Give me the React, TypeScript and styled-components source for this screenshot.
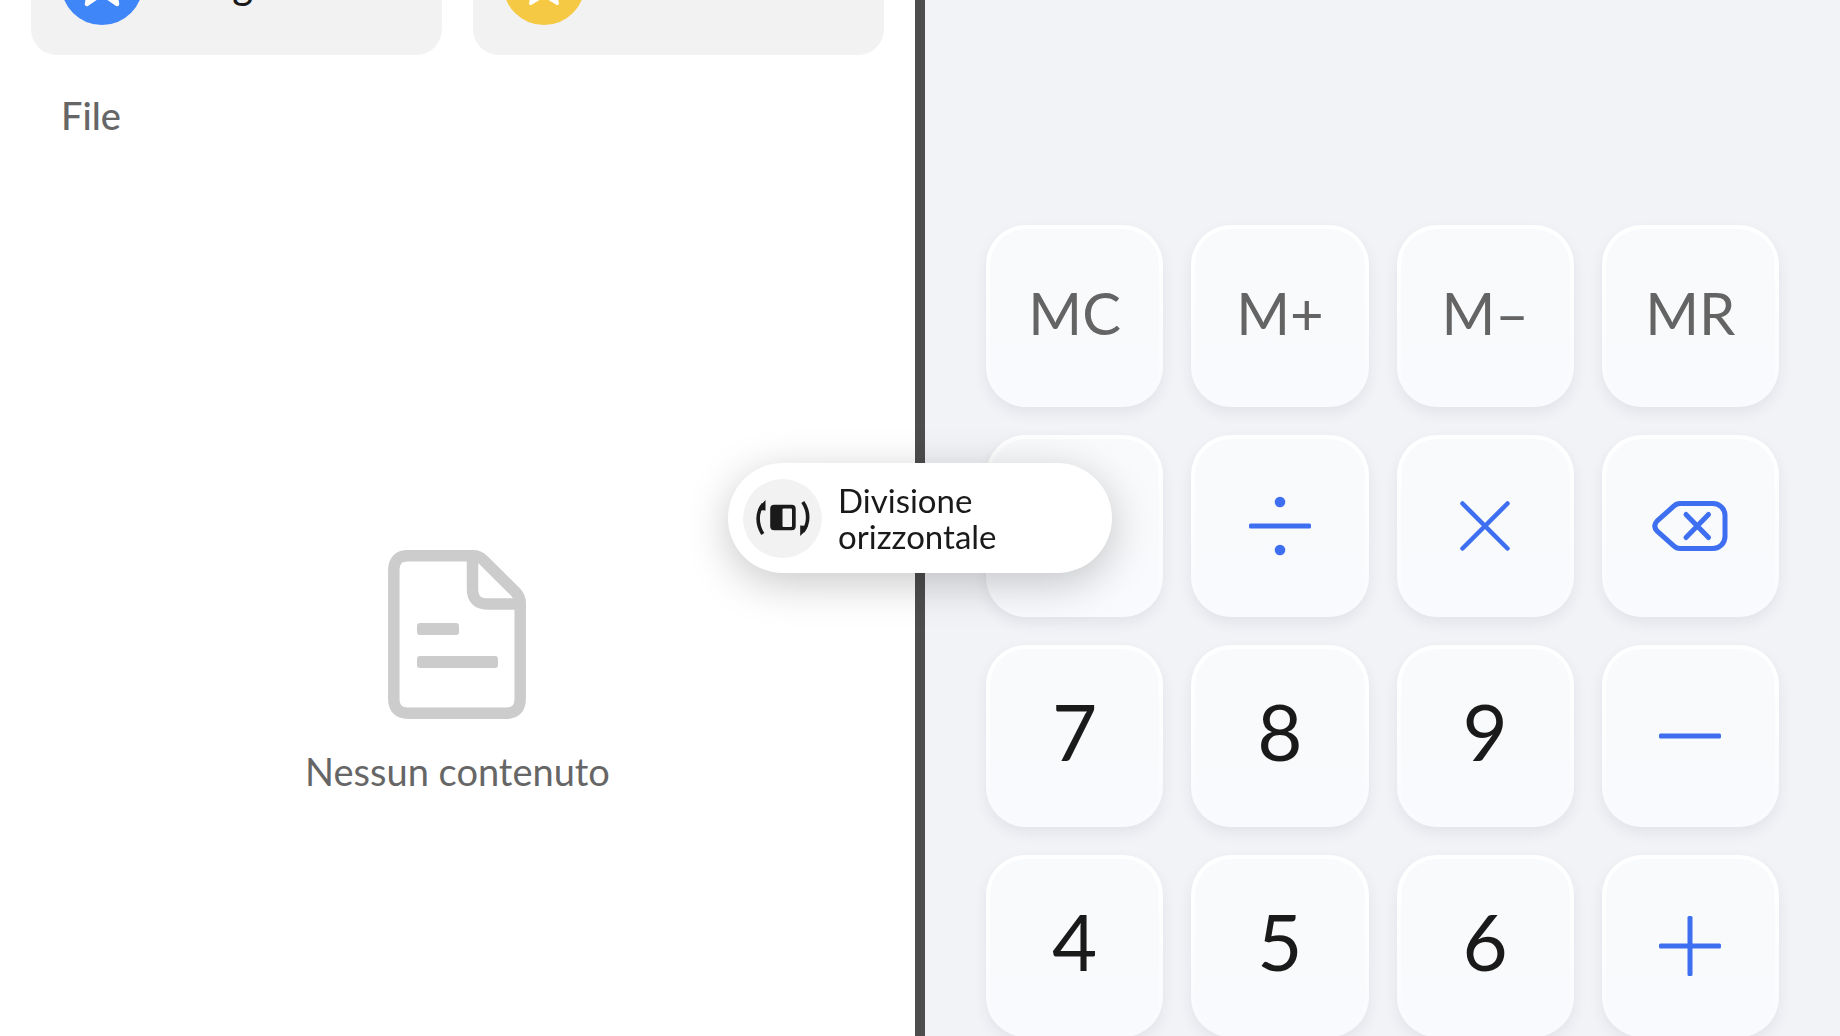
import React from "react";
import styled, { createGlobalStyle } from "styled-components";

const GlobalStyle = createGlobalStyle`
  *, *::before, *::after { box-sizing: border-box; }
  body {
    margin: 0;
    background: #fff;
    font-family: Lato, "Noto Sans", sans-serif;
    color: #1a1a1a;
  }
  button { font: inherit; color: inherit; cursor: pointer; }
  svg { display: block; }
`;

const Screen = styled.main`
  display: grid;
  grid-template-columns: 1fr 10px 1fr;
  height: 100vh;
  overflow: hidden;
`;

const FilesPane = styled.section`
  display: flex;
  flex-direction: column;
  min-width: 0;
  background: #fff;
`;

/* The shortcuts are scrolled up: only their lower edge stays in view. */
const Shortcuts = styled.div`
  display: flex;
  align-items: flex-end;
  gap: 31px;
  height: 55px;
  padding: 0 31px;
  overflow: hidden;
`;

const Shortcut = styled.button`
  display: flex;
  flex: 1;
  align-items: center;
  gap: 50px;
  height: 142px;
  padding: 0 30px;
  border: 0;
  border-radius: 26px;
  background: #f2f2f2;
  font-size: 40px;
  font-weight: 500;
  line-height: 48px;
`;

const Badge = styled.span<{ $color: string }>`
  display: grid;
  place-items: center;
  width: 82px;
  height: 82px;
  border-radius: 50%;
  background: ${(p) => p.$color};
`;

const SectionTitle = styled.h2`
  margin: 0;
  padding: 38px 61px 40px;
  font-size: 38px;
  font-weight: 500;
  line-height: 44px;
  color: #666;
`;

const EmptyState = styled.div`
  display: flex;
  flex-direction: column;
  align-items: center;
  gap: 30px;
  padding-top: 373px;
`;

const EmptyText = styled.p`
  margin: 0;
  font-size: 38px;
  line-height: 44px;
  color: #666;
`;

const Divider = styled.div`
  background: #4d4d4d;
`;

const CalculatorPane = styled.section`
  min-width: 0;
  padding: 225px 61px 0;
  background: #f2f3f7;
`;

const Keypad = styled.div`
  display: grid;
  grid-template-columns: repeat(4, 1fr);
  grid-auto-rows: 182px;
  gap: 28px;
`;

type Tone = "memory" | "digit" | "operator";

const tones: Record<Tone, { color: string; size: number; lift: number }> = {
  memory: { color: "#646464", size: 58, lift: 6 },
  digit: { color: "#1a1a1a", size: 78, lift: 10 },
  operator: { color: "#3d6ff0", size: 58, lift: 0 },
};

const Key = styled.button<{ $tone: Tone }>`
  display: flex;
  align-items: center;
  justify-content: center;
  padding: 0 0 ${(p) => tones[p.$tone].lift}px;
  border: 4px solid transparent;
  border-radius: 40px;
  background:
    linear-gradient(#f9fafb, #f9fafd) padding-box,
    linear-gradient(#fff 20%, #f9fafd) border-box;
  box-shadow: 0 6px 14px rgba(40, 45, 60, 0.08);
  color: ${(p) => tones[p.$tone].color};
  font-size: ${(p) => tones[p.$tone].size}px;
  line-height: 1;
`;

const SplitPill = styled.button`
  position: fixed;
  top: 50%;
  left: 50%;
  transform: translate(-50%, -50%);
  display: flex;
  align-items: center;
  gap: 16px;
  width: 384px;
  height: 110px;
  padding: 0 15px;
  border: 0;
  border-radius: 55px;
  background: #fff;
  box-shadow: 0 10px 44px rgba(0, 0, 0, 0.22);
  font-size: 33px;
  line-height: 36px;
  text-align: left;
`;

const PillIcon = styled.span`
  display: grid;
  place-items: center;
  flex: none;
  width: 79px;
  height: 79px;
  border-radius: 50%;
  background: #f2f2f2;
`;

const PillLabel = styled.span`
  width: 220px;
`;

const STAR =
  "M24 2 L30.2 16.5 L45.9 17.9 L34 28.2 L37.5 43.6 L24 35.5 L10.5 43.6 L14 28.2 L2.1 17.9 L17.8 16.5 Z";

const Star = ({ filled }: { filled?: boolean }) => (
  <svg width="48" height="48" viewBox="0 0 48 48" aria-hidden="true">
    <path
      d={
        filled
          ? STAR
          : "M24 2 L31 15 L45.9 17.900 L36 28 L39 44 L24 33.500 L9 44 L12 28 L2.100 17.900 L17 15 Z"
      }
      fill={filled ? "#fff" : "none"}
      stroke="#fff"
      strokeWidth={filled ? 3 : 4.5}
      strokeLinejoin="round"
    />
  </svg>
);

const DocumentIcon = () => (
  <svg width="139" height="169" viewBox="0 0 139 169" fill="none" aria-hidden="true">
    <g stroke="#ccc" strokeWidth="11.5">
      <path d="M20 5.8H85Q91 5.8 95 9.8L127.500 42Q132.200 47 132.200 53V148.500Q132.200 163.200 118 163.200H20Q5.800 163.200 5.800 148.500V20.500Q5.800 5.800 20 5.800Z" />
      <path d="M84.500 7V39Q84.500 54 99.500 54H132" />
    </g>
    <rect x="29" y="73" width="42" height="12" rx="3" fill="#ccc" />
    <rect x="29" y="106" width="81" height="12" rx="3" fill="#ccc" />
  </svg>
);

const SplitIcon = () => (
  <svg width="54" height="36" viewBox="0 0 54 36" fill="none" aria-hidden="true">
    <rect x="14.200" y="4.800" width="25.500" height="25.500" rx="4" fill="#1a1a1a" />
    <rect x="26.500" y="8.500" width="9.500" height="18.500" rx="1" fill="#f2f2f2" />
    <path
      d="M7.200 4C.5 12.500 .5 24 6.800 34M46.800 2C53.300 11.500 53.300 23 47 31.500"
      stroke="#1a1a1a"
      strokeWidth="3.600"
    />
    <path d="M9.500 0V10.500L2 10Q5 4 9.500 0ZM44.200 36V25.500L52 26Q49 32 44.200 36Z" fill="#1a1a1a" />
  </svg>
);

const DivideIcon = () => (
  <svg width="62" height="62" viewBox="0 0 62 62" fill="currentColor" aria-hidden="true">
    <rect y="28.500" width="62" height="5" rx="1.500" />
    <circle cx="31" cy="7" r="5.300" />
    <circle cx="31" cy="55" r="5.300" />
  </svg>
);

const MultiplyIcon = () => (
  <svg
    width="50"
    height="50"
    viewBox="0 0 50 50"
    stroke="currentColor"
    strokeWidth="4.5"
    strokeLinecap="round"
    aria-hidden="true"
  >
    <path d="M2.500 2.500L47.500 47.500M47.500 2.500L2.500 47.500" />
  </svg>
);

const BackspaceIcon = () => (
  <svg
    width="76"
    height="52"
    viewBox="0 0 76 52"
    fill="none"
    stroke="currentColor"
    strokeWidth="5"
    strokeLinecap="round"
    aria-hidden="true"
  >
    <path d="M28 3.500H61A12 12 0 0 1 73 15.500V36.500A12 12 0 0 1 61 48.500H28Q24.500 48.500 22 46L5.500 31.500Q0 26 5.500 20.500L22 6Q24.500 3.500 28 3.500Z" />
    <path d="M34 14.500L56.500 37.500M56.500 14.500L34 37.500" />
  </svg>
);

const MinusIcon = () => (
  <svg width="62" height="62" viewBox="0 0 62 62" fill="currentColor" aria-hidden="true">
    <rect y="28.500" width="62" height="5" rx="1.500" />
  </svg>
);

const PlusIcon = () => (
  <svg width="62" height="62" viewBox="0 0 62 62" fill="currentColor" aria-hidden="true">
    <rect y="28.500" width="62" height="5" rx="1.500" />
    <rect x="28.500" y="1" width="5" height="60" rx="1.500" />
  </svg>
);

interface KeySpec {
  name: string;
  tone: Tone;
  face?: React.ReactNode;
}

const keys: KeySpec[] = [
  { name: "MC", tone: "memory", face: "MC" },
  { name: "M+", tone: "memory", face: "M+" },
  { name: "M–", tone: "memory", face: "M–" },
  { name: "MR", tone: "memory", face: "MR" },
  { name: "Cancella tutto", tone: "operator" },
  { name: "Dividi", tone: "operator", face: <DivideIcon /> },
  { name: "Moltiplica", tone: "operator", face: <MultiplyIcon /> },
  { name: "Elimina", tone: "operator", face: <BackspaceIcon /> },
  { name: "7", tone: "digit", face: "7" },
  { name: "8", tone: "digit", face: "8" },
  { name: "9", tone: "digit", face: "9" },
  { name: "Sottrai", tone: "operator", face: <MinusIcon /> },
  { name: "4", tone: "digit", face: "4" },
  { name: "5", tone: "digit", face: "5" },
  { name: "6", tone: "digit", face: "6" },
  { name: "Somma", tone: "operator", face: <PlusIcon /> },
];

export default function App() {
  return (
    <>
      <GlobalStyle />
      <Screen>
        <FilesPane>
          <Shortcuts>
            <Shortcut type="button">
              <Badge $color="#3f86f8">
                <Star />
              </Badge>
              Tag
            </Shortcut>
            <Shortcut type="button" aria-label="Preferiti">
              <Badge $color="#f5c944">
                <Star filled />
              </Badge>
            </Shortcut>
          </Shortcuts>
          <SectionTitle>File</SectionTitle>
          <EmptyState>
            <DocumentIcon />
            <EmptyText>Nessun contenuto</EmptyText>
          </EmptyState>
        </FilesPane>
        <Divider />
        <CalculatorPane>
          <Keypad>
            {keys.map((k) => (
              <Key key={k.name} type="button" $tone={k.tone} aria-label={k.name}>
                {k.face}
              </Key>
            ))}
          </Keypad>
        </CalculatorPane>
      </Screen>
      <SplitPill type="button">
        <PillIcon>
          <SplitIcon />
        </PillIcon>
        <PillLabel>Divisione orizzontale</PillLabel>
      </SplitPill>
    </>
  );
}
